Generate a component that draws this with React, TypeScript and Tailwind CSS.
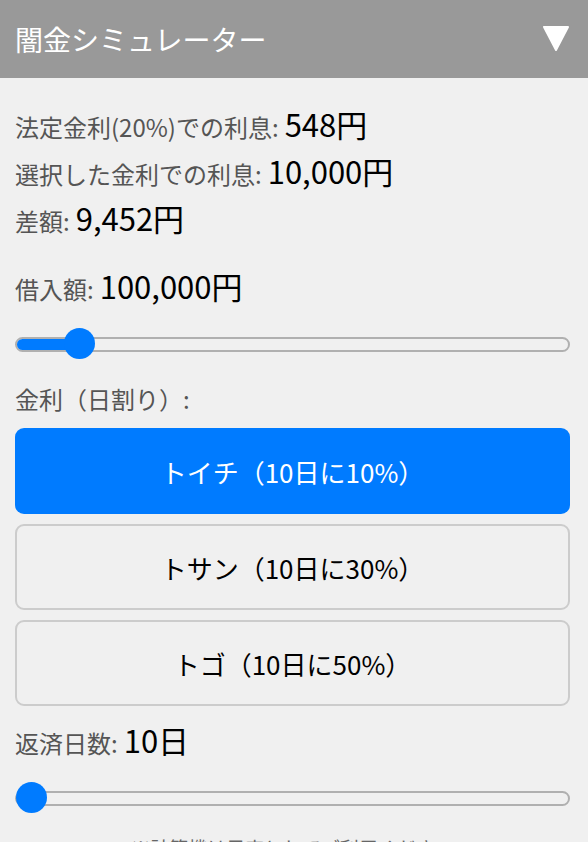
import React, { useState } from "react";

const font = { fontFamily: '"Noto Sans CJK JP", "Noto Sans", sans-serif' };

function Slider({ pct }: { pct: number }) {
  return (
    <div className="relative h-[32px] flex items-center">
      <div className="w-full h-[15px] rounded-full border-2 border-[#b0b0b0] bg-[#f0f0f0] overflow-hidden">
        <div className="h-full bg-[#007bff]" style={{ width: `${pct}%` }} />
      </div>
      <div
        className="absolute top-0 w-[31px] h-[31px] rounded-full bg-[#007bff]"
        style={{ left: `calc(${pct}% - 15px)` }}
      />
    </div>
  );
}

export default function App() {
  const [rate, setRate] = useState(0);
  const options = ["トイチ（10日に10%）", "トサン（10日に30%）", "トゴ（10日に50%）"];
  return (
    <div className="w-[588px] h-[842px] overflow-hidden bg-[#f0f0f0]" style={font}>
      <div className="h-[78px] bg-[#999999] flex items-center justify-between pl-[15px] pr-[18px]">
        <span className="text-white text-[28px] leading-none">闇金シミュレーター</span>
        <svg width="28" height="28" viewBox="0 0 28 28" className="mt-[-2px]">
          <polygon points="2,3 26,3 14,26" fill="white" stroke="white" strokeWidth="2" strokeLinejoin="round" />
        </svg>
      </div>
      <div className="pl-[15px] pr-[18px] pt-[23px]">
        <div className="flex items-baseline h-[46px] leading-[46px]">
          <span className="text-[24px] text-[#555]">法定金利(20%)での利息:</span>
          <span className="text-[31px] text-black ml-[6px]">548円</span>
        </div>
        <div className="flex items-baseline h-[47px] leading-[47px]">
          <span className="text-[24px] text-[#555]">選択した金利での利息:</span>
          <span className="text-[31px] text-black ml-[6px]">10,000円</span>
        </div>
        <div className="flex items-baseline h-[47px] leading-[47px]">
          <span className="text-[24px] text-[#555]">差額:</span>
          <span className="text-[31px] text-black ml-[6px]">9,452円</span>
        </div>
        <div className="flex items-baseline h-[46px] leading-[46px] mt-[22px]">
          <span className="text-[24px] text-[#555]">借入額:</span>
          <span className="text-[31px] text-black ml-[6px]">100,000円</span>
        </div>
        <div className="mt-[19px]">
          <Slider pct={11.5} />
        </div>
        <div className="mt-[19px] h-[40px] leading-[40px] text-[24px] text-[#555]">金利（日割り）:</div>
        <div className="mt-[9px] flex flex-col gap-[10px]">
          {options.map((o, i) => (
            <button
              key={o}
              onClick={() => setRate(i)}
              className={
                i === rate
                  ? "h-[86px] w-full rounded-[9px] bg-[#007bff] text-white text-[26px]"
                  : "h-[86px] w-full rounded-[9px] border-2 border-[#cccccc] bg-[#f0f0f0] text-black text-[26px]"
              }
              style={font}
            >
              {o}
            </button>
          ))}
        </div>
        <div className="flex items-baseline h-[46px] leading-[46px] mt-[11px]">
          <span className="text-[24px] text-[#555]">返済日数:</span>
          <span className="text-[31px] text-black ml-[6px]">10日</span>
        </div>
        <div className="mt-[19px]">
          <Slider pct={2.8} />
        </div>
        <div className="mt-[20px] text-center text-[19px] text-[#666]">※計算機は目安としてご利用ください</div>
      </div>
    </div>
  );
}
